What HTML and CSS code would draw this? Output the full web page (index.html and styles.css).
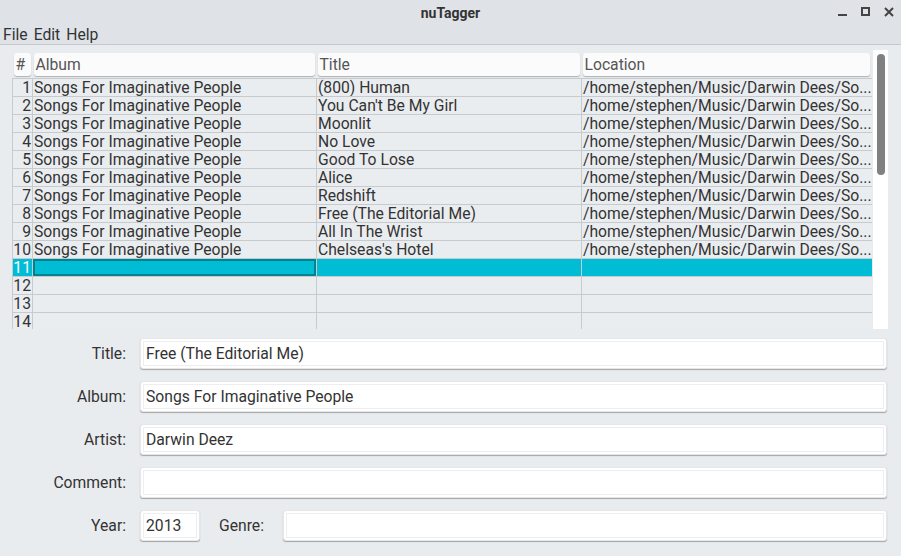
FILE: index.html
```html
<!DOCTYPE html>
<html>
<head>
<meta charset="utf-8">
<link rel="stylesheet" href="styles.css">
</head>
<body>
<div class="window">
  <div class="titlebar">
    <div class="title">nuTagger</div>
    <div class="controls">
      <svg width="12" height="12" viewBox="0 0 12 12"><rect x="1" y="8" width="9" height="2" fill="#444"/></svg>
      <svg width="12" height="12" viewBox="0 0 12 12"><rect x="2" y="2" width="7" height="7" fill="none" stroke="#444" stroke-width="2"/></svg>
      <svg width="12" height="12" viewBox="0 0 12 12"><path d="M2 2 L10 10 M10 2 L2 10" stroke="#444" stroke-width="2"/></svg>
    </div>
  </div>
  <div class="menubar"><span>File</span><span>Edit</span><span>Help</span></div>
  <div class="tablewrap">
    <div class="tableview">
      <table class="grid">
        <colgroup><col class="c0"><col class="c1"><col class="c2"><col class="c3"></colgroup>
        <thead>
          <tr><th class="num"><div class="hd">#</div></th><th><div class="hd">Album</div></th><th><div class="hd">Title</div></th><th><div class="hd">Location</div></th></tr>
        </thead>
        <tbody>
          <tr><td class="num">1</td><td>Songs For Imaginative People</td><td>(800) Human</td><td>/home/stephen/Music/Darwin Dees/So...</td></tr>
          <tr><td class="num">2</td><td>Songs For Imaginative People</td><td>You Can't Be My Girl</td><td>/home/stephen/Music/Darwin Dees/So...</td></tr>
          <tr><td class="num">3</td><td>Songs For Imaginative People</td><td>Moonlit</td><td>/home/stephen/Music/Darwin Dees/So...</td></tr>
          <tr><td class="num">4</td><td>Songs For Imaginative People</td><td>No Love</td><td>/home/stephen/Music/Darwin Dees/So...</td></tr>
          <tr><td class="num">5</td><td>Songs For Imaginative People</td><td>Good To Lose</td><td>/home/stephen/Music/Darwin Dees/So...</td></tr>
          <tr><td class="num">6</td><td>Songs For Imaginative People</td><td>Alice</td><td>/home/stephen/Music/Darwin Dees/So...</td></tr>
          <tr><td class="num">7</td><td>Songs For Imaginative People</td><td>Redshift</td><td>/home/stephen/Music/Darwin Dees/So...</td></tr>
          <tr><td class="num">8</td><td>Songs For Imaginative People</td><td>Free (The Editorial Me)</td><td>/home/stephen/Music/Darwin Dees/So...</td></tr>
          <tr><td class="num">9</td><td>Songs For Imaginative People</td><td>All In The Wrist</td><td>/home/stephen/Music/Darwin Dees/So...</td></tr>
          <tr><td class="num">10</td><td>Songs For Imaginative People</td><td>Chelseas's Hotel</td><td>/home/stephen/Music/Darwin Dees/So...</td></tr>
          <tr class="sel"><td class="num">11</td><td class="cur"></td><td></td><td></td></tr>
          <tr><td class="num">12</td><td></td><td></td><td></td></tr>
          <tr><td class="num">13</td><td></td><td></td><td></td></tr>
          <tr><td class="num">14</td><td></td><td></td><td></td></tr>
        </tbody>
      </table>
    </div>
    <div class="scrollbar"><div class="thumb"></div></div>
  </div>
  <div class="form">
    <div class="row"><label>Title:</label><div class="input grow">Free (The Editorial Me)</div></div>
    <div class="row"><label>Album:</label><div class="input grow">Songs For Imaginative People</div></div>
    <div class="row"><label>Artist:</label><div class="input grow">Darwin Deez</div></div>
    <div class="row"><label>Comment:</label><div class="input grow"></div></div>
    <div class="row"><label>Year:</label><div class="input year">2013</div><label class="genre">Genre:</label><div class="input grow"></div></div>
  </div>
</div>
</body>
</html>
```
FILE: styles.css
```css
* { box-sizing: border-box; }
html, body { margin: 0; padding: 0; }
body {
  width: 901px; height: 556px; overflow: hidden;
  background: #e9ecef;
  font-family: Roboto, "Liberation Sans", sans-serif;
  color: #333;
}
.window { display: flex; flex-direction: column; height: 556px; }
.titlebar {
  height: 25px; position: relative;
  background: #dfe3e7;
  display: flex; align-items: center; justify-content: center;
}
.title { font-weight: bold; font-size: 14px; color: #333; }
.controls {
  position: absolute; right: 6px; top: 6px;
  display: flex; gap: 11px;
}
.menubar {
  height: 20px; background: #dfe3e7;
  border-bottom: 1px solid #c5c9cd;
  display: flex; gap: 6px; padding-left: 3px;
  font-size: 15.7px; line-height: 20px; color: #333;
}
.tablewrap {
  display: flex; margin: 7px 13px 0 12px; height: 283px;
}
.tableview { width: 860px; overflow: hidden; height: 277px; }
.grid {
  border-collapse: collapse; table-layout: fixed; width: 860px;
  font-size: 15.7px;
}
.c0 { width: 20px; } .c1 { width: 284px; } .c2 { width: 265px; } .c3 { width: 291px; }
.grid th { padding: 1px 2px 2px 1px; height: 26px; font-weight: normal; text-align: left; }
.grid th.num { padding-left: 1px; padding-right: 2px; }
.grid th:last-child { padding-right: 3px; }
.hd {
  background: #fbfbfb; border-radius: 3px;
  box-shadow: 0 1px 1px rgba(0,0,0,0.25);
  height: 23px; line-height: 23px; padding-left: 2px; color: #555;
  white-space: nowrap; overflow: hidden;
}
.grid td {
  height: 18px; padding: 0 0 0 1px; line-height: 17px;
  border: 1px solid #c8cbce; background: #eaedf0;
  white-space: nowrap; overflow: hidden; color: #333;
}
.grid td.num { text-align: right; padding: 0 1px 0 0; }
.grid tr.sel td { background: #00bcd4; color: #fff; }
.grid tr.sel td.cur { box-shadow: inset 0 0 0 2px #00838f; }
.scrollbar {
  width: 15px; margin-left: 1px; background: #fff; height: 279px;
  padding: 4px 3px; margin-top: -2px;
}
.thumb { width: 8px; height: 121px; background: #808080; border-radius: 4px; margin-left: 1px; }
.form { display: flex; flex-direction: column; gap: 13px; padding: 3px 14px 0 0; }
.row { display: flex; align-items: center; height: 30px; }
.row label { width: 126px; text-align: right; font-size: 15.7px; color: #333; margin-right: 14px; }
.row label.genre { width: auto; margin-left: 19px; margin-right: 19px; }
.input {
  height: 31px; background: #fff; border-radius: 3px;
  border: 1px solid #e4e6e8;
  box-shadow: 0 1px 1px rgba(0,0,0,0.3), inset 0 0 0 2px #fff, inset 0 0 0 3px #eceef0;
  font-size: 15.7px; line-height: 29px; padding-left: 5px; color: #333;
}
.input.grow { flex: 1; }
.input.year { width: 60px; }
```
